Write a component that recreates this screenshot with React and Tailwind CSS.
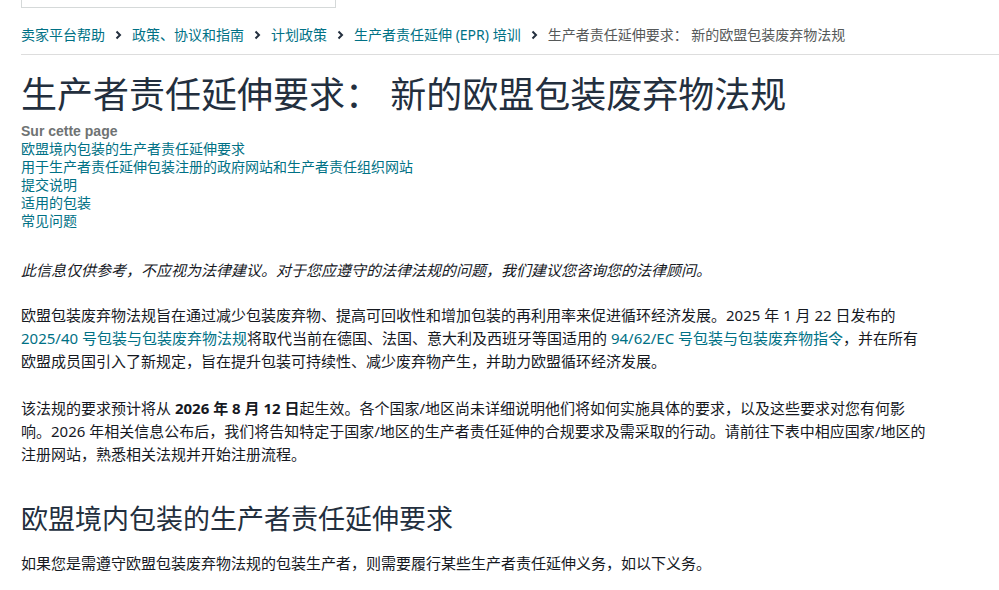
import React from 'react';

const crumbs = [
  '卖家平台帮助',
  '政策、协议和指南',
  '计划政策',
  '生产者责任延伸 (EPR) 培训',
];

const toc = [
  '欧盟境内包装的生产者责任延伸要求',
  '用于生产者责任延伸包装注册的政府网站和生产者责任组织网站',
  '提交说明',
  '适用的包装',
  '常见问题',
];

const Chevron = () => (
  <svg width="7" height="10" viewBox="0 0 7 10" className="mx-[10px] shrink-0">
    <path d="M1.5 1.5 L5 5 L1.5 8.5" fill="none" stroke="#232f3e" strokeWidth="2" />
  </svg>
);

const Link = ({ children }) => (
  <a href="#" className="text-[#007185] hover:underline">
    {children}
  </a>
);

export default function App() {
  return (
    <div
      className="min-h-[590px] bg-white text-[#16191f]"
      style={{ fontFamily: '"Noto Sans", "Noto Sans CJK SC", sans-serif' }}
    >
      {/* search box scrolled off the top */}
      <div className="ml-[21px] h-[8px] w-[315px] border border-t-0 border-[#d5d9d9]" />

      {/* breadcrumb */}
      <div className="ml-[21px] mt-[17px] flex h-[30px] items-start border-b border-[#dddddd] text-[14px] leading-[20px]">
        {crumbs.map((c) => (
          <React.Fragment key={c}>
            <Link>{c}</Link>
            <span className="flex h-[20px] items-center">
              <Chevron />
            </span>
          </React.Fragment>
        ))}
        <span className="text-[#565959]">生产者责任延伸要求： 新的欧盟包装废弃物法规</span>
      </div>

      <div className="w-[930px] pl-[21px]">
        <h1 className="mt-[18px] h-[44px] text-[36px] font-normal leading-[44px] text-[#232f3e]">
          生产者责任延伸要求： 新的欧盟包装废弃物法规
        </h1>

        <div className="mt-[5px] text-[14px] leading-[18px]">
          <div
            className="h-[18px] font-bold text-[#6f7373]"
            style={{ fontFamily: '"Liberation Sans", Arial, sans-serif' }}
          >
            Sur cette page
          </div>
          {toc.map((t) => (
            <div key={t} className="h-[18px]">
              <Link>{t}</Link>
            </div>
          ))}
        </div>

        <div className="mt-[29px] w-[908px] text-[15px] leading-[23px]">
          <p className="mb-[22px] italic">
            此信息仅供参考，不应视为法律建议。对于您应遵守的法律法规的问题，我们建议您咨询您的法律顾问。
          </p>
          <p className="mb-[24px]">
            欧盟包装废弃物法规旨在通过减少包装废弃物、提高可回收性和增加包装的再利用率来促进循环经济发展。2025 年 1 月 22 日发布的{' '}
            <Link>2025/40 号包装与包装废弃物法规</Link>将取代当前在德国、法国、意大利及西班牙等国适用的{' '}
            <Link>94/62/EC 号包装与包装废弃物指令</Link>，并在所有欧盟成员国引入了新规定，旨在提升包装可持续性、减少废弃物产生，并助力欧盟循环经济发展。
          </p>
          <p>
            该法规的要求预计将从 <b>2026 年 8 月 12 日</b>起生效。各个国家/地区尚未详细说明他们将如何实施具体的要求，以及这些要求对您有何影响。2026 年相关信息公布后，我们将告知特定于国家/地区的生产者责任延伸的合规要求及需采取的行动。请前往下表中相应国家/地区的注册网站，熟悉相关法规并开始注册流程。
          </p>
        </div>

        <h2 className="mt-[35px] text-[27px] font-normal leading-[36px] text-[#232f3e]">
          欧盟境内包装的生产者责任延伸要求
        </h2>
        <p className="mt-[15px] text-[15px] leading-[23px]">
          如果您是需遵守欧盟包装废弃物法规的包装生产者，则需要履行某些生产者责任延伸义务，如以下义务。
        </p>
      </div>
    </div>
  );
}
